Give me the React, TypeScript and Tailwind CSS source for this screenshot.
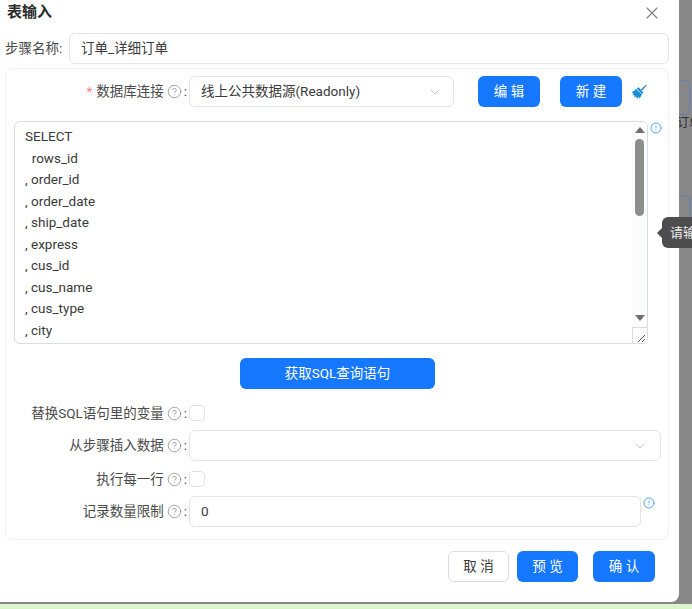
import React from 'react';
import { X, ChevronDown, CircleHelp, CircleAlert } from 'lucide-react';

const font = { fontFamily: 'Roboto, "Noto Sans CJK SC", sans-serif' };

const sqlLines = ['SELECT', '  rows_id', ', order_id', ', order_date', ', ship_date', ', express', ', cus_id', ', cus_name', ', cus_type', ', city'];

const Label: React.FC<{ text: string; required?: boolean }> = ({ text, required }) => (
    <div className="w-[183px] shrink-0 flex items-center justify-end text-[13.5px] text-[#4a4a4a]">
        {required && <span className="text-[#ff7a7c] mr-1">*</span>}
        <span>{text}</span>
        <CircleHelp className="w-[15px] h-[15px] ml-[3px] text-[#8c8c8c]" strokeWidth={1.25} />
        <span className="ml-[2px] mr-[2px]">:</span>
    </div>
);

const Checkbox = () => <div className="w-4 h-4 rounded-[4px] border border-[#e2e2e2] bg-white" />;

const BlueButton: React.FC<{ text: string; className: string }> = ({ text, className }) => (
    <button type="button" className={`h-[31px] rounded-md bg-[#1677ff] text-white text-[13.5px] flex items-center justify-center ${className}`}>
        {text}
    </button>
);

const BroomIcon = () => (
    <svg width="16" height="16" viewBox="0 0 16 16" className="ml-[9px]">
        <path d="M15.4 0.6 L10 5.6 L11 6.6 L15.8 1.2 Z" fill="#1f6fb8" />
        <path d="M5.6 4.4 L7.6 3.2 L12.4 8.4 L11 10 Z" fill="#1a8cd8" />
        <path d="M5 5 L11 10.6 L8.6 14.6 L7.4 12.6 L6.4 15 L5 12.4 L3.6 13.6 L3.4 11 L1.4 11.6 L2.6 9.6 L0.6 8.8 Z" fill="#1a8cd8" />
    </svg>
);

export default function App() {
    return (
        <div className="relative w-[692px] h-[609px] overflow-hidden bg-[#878787]" style={font}>
            {/* things behind the dialog */}
            <div className="absolute left-[660px] top-[80px] w-[30px] h-[35px] rounded-md border border-[#5f7fb5]" />
            <div className="absolute left-[677px] top-[114px] text-[12px] text-[#2b2b2b] whitespace-nowrap">订单</div>
            <div className="absolute left-[660px] top-[195px] w-[30px] h-[30px] rounded-md border border-[#5f7fb5]" />
            <div className="absolute left-0 bottom-0 w-full h-[5px] bg-[#d9f5c9]" />

            <div className="relative w-[679px] h-[602px] bg-white rounded-br-lg">
                <div className="flex items-center justify-between h-[25px] pl-[7px] pr-[17px]">
                    <h1 className="text-[15px] font-bold text-[#2b2b2b]">表输入</h1>
                    <X className="w-5 h-5 text-[#808080]" strokeWidth={1.4} />
                </div>

                <div className="flex items-center mt-2 pl-[5px] pr-[10px]">
                    <div className="w-[64px] shrink-0 text-[13.5px] text-[#4a4a4a]">步骤名称:</div>
                    <div className="flex-1 h-[31px] rounded-md border border-[#e4e4e4] px-[11px] flex items-center text-[13.5px] text-[#3a3a3a]">订单_详细订单</div>
                </div>

                <div className="mt-[4px] ml-[5px] mr-[10px] h-[472px] rounded-lg border border-[#f2f2f2] pt-[7px]">
                    <div className="flex items-center h-[31px]">
                        <Label text="数据库连接" required />
                        <div className="w-[265px] h-[31px] rounded-md border border-[#e4e4e4] pl-[11px] pr-[10px] flex items-center justify-between text-[13.5px] text-[#3a3a3a]">
                            <span>线上公共数据源(Readonly)</span>
                            <ChevronDown className="w-4 h-4 text-[#bdbdbd]" strokeWidth={1.25} />
                        </div>
                        <BlueButton text="编 辑" className="w-[62px] ml-6" />
                        <BlueButton text="新 建" className="w-[62px] ml-5" />
                        <BroomIcon />
                    </div>

                    <div className="flex mt-[14px] ml-2">
                        <div className="w-[634px] h-[223px] rounded-md border border-[#d5dce8] flex overflow-hidden">
                            <div className="flex-1 pl-[10px] pt-[4px] text-[13.5px] leading-[21.5px] text-[#3a3a3a] whitespace-pre">
                                {sqlLines.map((line) => (
                                    <div key={line}>{line}</div>
                                ))}
                            </div>
                            <div className="w-[15px] flex flex-col items-center bg-[#fcfcfc]">
                                <div className="mt-[5px] w-0 h-0 border-x-[5px] border-x-transparent border-b-[6px] border-b-[#6e6e6e]" />
                                <div className="mt-[6px] w-[9px] h-[77px] rounded-full bg-[#8e8e8e]" />
                                <div className="mt-[99px] w-0 h-0 border-x-[5px] border-x-transparent border-t-[6px] border-t-[#6e6e6e]" />
                                <div className="mt-[6px] w-[15px] h-[16px] border-l border-t border-[#dcdcdc] bg-white flex items-end justify-end pr-[1px]">
                                    <svg width="9" height="9" viewBox="0 0 9 9" stroke="#555" fill="none">
                                        <path d="M1 8 L8 1 M5 8 L8 5" />
                                    </svg>
                                </div>
                            </div>
                        </div>
                        <CircleAlert className="w-3 h-3 ml-[2px] mt-[1px] text-[#3b9df5]" strokeWidth={1.75} />
                    </div>

                    <div className="flex justify-center mt-[14px] w-[663px]">
                        <BlueButton text="获取SQL查询语句" className="w-[195px]" />
                    </div>

                    <div className="flex items-center h-4 mt-4">
                        <Label text="替换SQL语句里的变量" />
                        <Checkbox />
                    </div>

                    <div className="flex items-center h-[31px] mt-[9px]">
                        <Label text="从步骤插入数据" />
                        <div className="w-[472px] h-[31px] rounded-md border border-[#e4e4e4] pr-[12px] flex items-center justify-end">
                            <ChevronDown className="w-4 h-4 text-[#bdbdbd]" strokeWidth={1.25} />
                        </div>
                    </div>

                    <div className="flex items-center h-4 mt-[10px]">
                        <Label text="执行每一行" />
                        <Checkbox />
                    </div>

                    <div className="flex items-start h-[31px] mt-[9px]">
                        <div className="flex items-center h-[31px]">
                            <Label text="记录数量限制" />
                        </div>
                        <div className="w-[452px] h-[31px] rounded-md border border-[#e4e4e4] px-[11px] flex items-center text-[13.5px] text-[#3a3a3a]">0</div>
                        <CircleAlert className="w-3 h-3 ml-[2px] mt-[1px] text-[#3b9df5]" strokeWidth={1.75} />
                    </div>
                </div>

                <div className="flex items-center mt-[11px] pl-[448px]">
                    <button type="button" className="w-[61px] h-[31px] rounded-md border border-[#dcdcdc] bg-white text-[13.5px] text-[#3a3a3a]">取 消</button>
                    <BlueButton text="预 览" className="w-[61px] ml-2" />
                    <BlueButton text="确 认" className="w-[62px] ml-[15px]" />
                </div>
            </div>

            {/* validation tooltip peeking out from the editor */}
            <div className="absolute left-[657px] top-[217px] flex items-center">
                <div className="w-0 h-0 border-y-[5px] border-y-transparent border-r-[5px] border-r-[#4d4d4d]" />
                <div className="w-[40px] h-[31px] rounded-l-md bg-[#4d4d4d] pl-2 flex items-center text-[13px] text-[#ececec] overflow-hidden whitespace-nowrap">请输</div>
            </div>
        </div>
    );
}
